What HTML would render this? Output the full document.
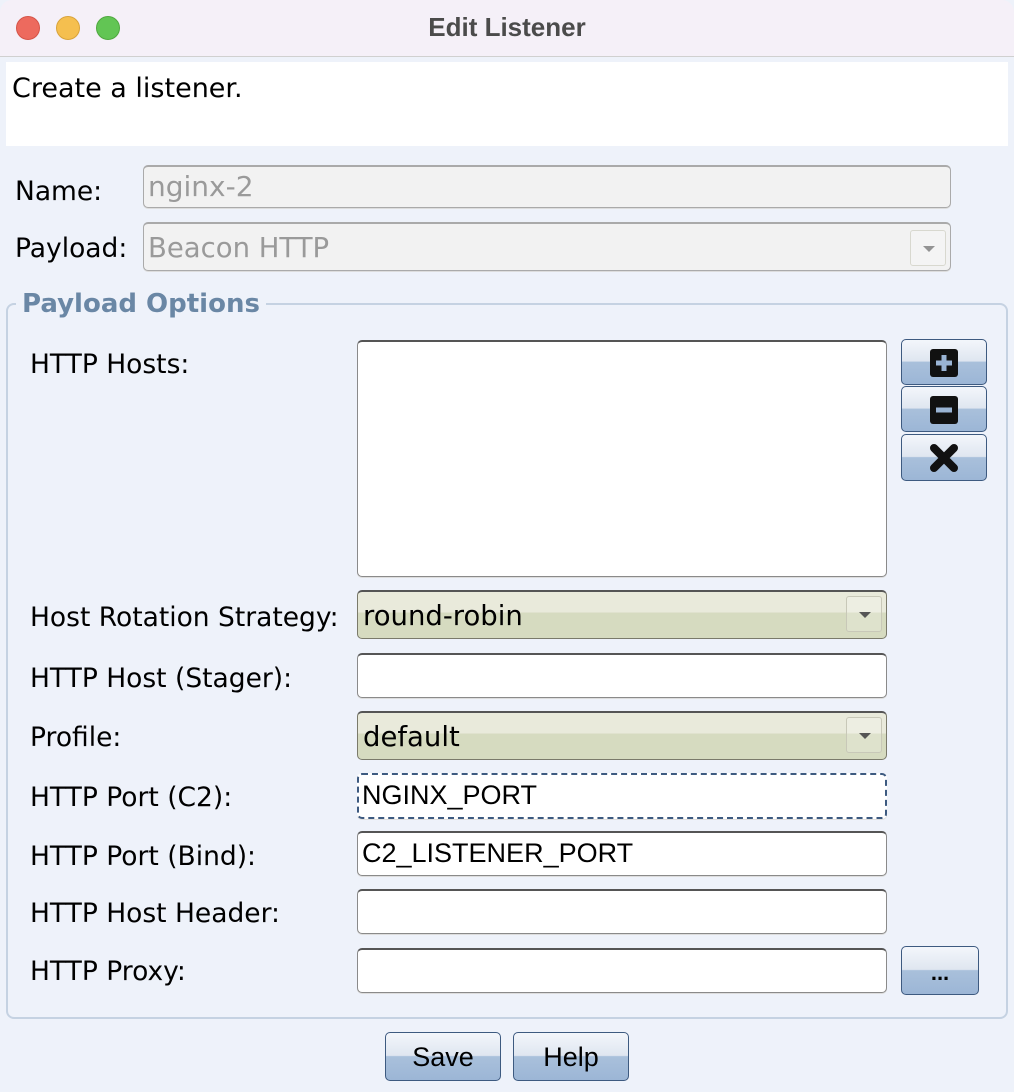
<!DOCTYPE html>
<html><head><meta charset="utf-8"><style>
*{box-sizing:border-box;margin:0;padding:0}
body{width:1014px;height:1092px;overflow:hidden;background:#eef2fa;font-family:"DejaVu Sans","Liberation Sans",sans-serif;position:relative;color:#000}
.a{position:absolute}
.lbl{position:absolute;font-size:26.5px;line-height:30px;white-space:nowrap;margin-top:2px}
.tf{position:absolute;background:#fff;border:1px solid #8a8a8a;border-top:2px solid #555;border-radius:5px;box-shadow:0 1px 0 #ddd;font-family:"Liberation Sans",sans-serif;font-size:27px;line-height:40px;padding-left:4px;white-space:nowrap}
.combo{position:absolute;border:1px solid #7a7a6a;border-top:2px solid #555;border-radius:5px;background:linear-gradient(#e9eadb 0,#e9eadb 45%,#d6dbc0 45%,#d6dbc0 100%);font-size:27.5px;line-height:48px;padding-left:5px;white-space:nowrap}
.arr{position:absolute;right:4px;top:4px;width:36px;height:36px;border:1px solid #c8c8b8;border-radius:3px;background:rgba(255,255,255,.2)}
.arr:after{content:"";position:absolute;left:12px;top:15px;border-left:6px solid transparent;border-right:6px solid transparent;border-top:6px solid #555}
.btn{position:absolute;border:1px solid #3d5a80;border-radius:5px;background:linear-gradient(#f3f6fb 0,#dfe6f0 48%,#a9c0db 50%,#9cb6d6 100%);font-family:"Liberation Sans",sans-serif;font-size:27px;text-align:center}
</style></head><body>
<div class="a" style="left:0;top:0;width:1014px;height:57px;background:#f5f0f8;border-bottom:1px solid #d0d0d0;border-radius:12px 12px 0 0"></div>
<div class="a" style="left:16px;top:16px;width:24px;height:24px;border-radius:50%;background:#ed6a5e;border:1px solid #d55448"></div>
<div class="a" style="left:56px;top:16px;width:24px;height:24px;border-radius:50%;background:#f5bf4f;border:1px solid #d9a33a"></div>
<div class="a" style="left:96px;top:16px;width:24px;height:24px;border-radius:50%;background:#62c554;border:1px solid #4fa83f"></div>
<div class="a" style="left:0;top:12px;width:1014px;text-align:center;font-family:'Liberation Sans',sans-serif;font-size:26px;font-weight:bold;color:#4b4b4b">Edit Listener</div>
<div class="a" style="left:6px;top:62px;width:1002px;height:84px;background:#fff"></div>
<div class="lbl" style="left:12px;top:72px;font-size:27px">Create a listener.</div>

<div class="lbl" style="left:15px;top:175px">Name:</div>
<div class="tf" style="left:143px;top:165px;width:808px;height:43px;background:#f2f2f2;border-color:#aaa;color:#9a9a9a;font-family:'DejaVu Sans',sans-serif;font-size:28px">nginx-2</div>
<div class="lbl" style="left:15px;top:232px">Payload:</div>
<div class="tf" style="left:143px;top:222px;width:808px;height:49px;background:#f2f2f2;border-color:#aaa;color:#9a9a9a;font-family:'DejaVu Sans',sans-serif;font-size:27.5px;line-height:48px">Beacon HTTP<div class="arr" style="top:6px;opacity:.6"></div></div>

<div class="a" style="left:6px;top:303px;width:1002px;height:716px;border:2px solid #c5d2e2;border-radius:8px"></div>
<div class="a" style="left:16px;top:289px;padding:0 6px;background:#eef2fa;font-size:26px;font-weight:bold;color:#6a87a5">Payload Options</div>

<div class="lbl" style="left:30px;top:348px">HTTP Hosts:</div>
<div class="tf" style="left:357px;top:340px;width:530px;height:237px"></div>
<div class="btn" style="left:901px;top:339px;width:86px;height:46px"><svg width="30" height="30" viewBox="0 0 30 30" style="margin-top:8px"><rect x="1" y="1" width="28" height="28" rx="3" fill="#111"/><path d="M15 7v16M7 15h16" stroke="#9ab4d4" stroke-width="5"/></svg></div>
<div class="btn" style="left:901px;top:386px;width:86px;height:46px"><svg width="30" height="30" viewBox="0 0 30 30" style="margin-top:8px"><rect x="1" y="1" width="28" height="28" rx="3" fill="#111"/><path d="M7 15h16" stroke="#9ab4d4" stroke-width="5"/></svg></div>
<div class="btn" style="left:901px;top:434px;width:86px;height:47px"><svg width="30" height="30" viewBox="0 0 30 30" style="margin-top:8px"><path d="M5 5L25 25M25 5L5 25" stroke="#111" stroke-width="8" stroke-linecap="round"/></svg></div>

<div class="lbl" style="left:30px;top:601px">Host Rotation Strategy:</div>
<div class="combo" style="left:357px;top:590px;width:530px;height:49px">round-robin<div class="arr"></div></div>
<div class="lbl" style="left:30px;top:662px">HTTP Host (Stager):</div>
<div class="tf" style="left:357px;top:653px;width:530px;height:45px"></div>
<div class="lbl" style="left:30px;top:721px">Profile:</div>
<div class="combo" style="left:357px;top:711px;width:530px;height:49px">default<div class="arr"></div></div>
<div class="lbl" style="left:30px;top:781px">HTTP Port (C2):</div>
<div class="tf" style="left:357px;top:773px;width:530px;height:46px;border:2px dashed #3d5a80;padding-left:3px">NGINX_PORT</div>
<div class="lbl" style="left:30px;top:840px">HTTP Port (Bind):</div>
<div class="tf" style="left:357px;top:831px;width:530px;height:45px">C2_LISTENER_PORT</div>
<div class="lbl" style="left:30px;top:897px">HTTP Host Header:</div>
<div class="tf" style="left:357px;top:889px;width:530px;height:45px"></div>
<div class="lbl" style="left:30px;top:955px">HTTP Proxy:</div>
<div class="tf" style="left:357px;top:948px;width:530px;height:45px"></div>
<div class="btn" style="left:901px;top:946px;width:78px;height:49px;line-height:52px;font-size:22px;font-weight:bold">...</div>

<div class="btn" style="left:385px;top:1032px;width:116px;height:49px;line-height:49px">Save</div>
<div class="btn" style="left:513px;top:1032px;width:116px;height:49px;line-height:49px">Help</div>
</body></html>
